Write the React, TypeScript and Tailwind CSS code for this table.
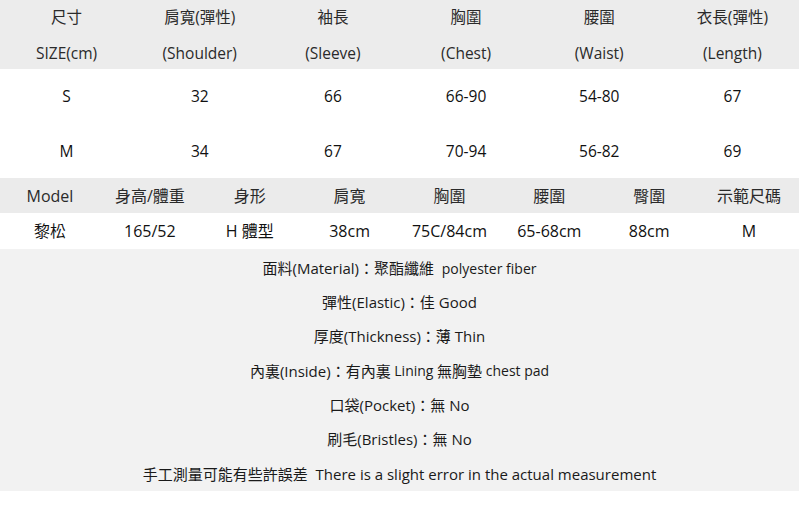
import React from "react";

const font = { fontFamily: '"Open Sans", "Noto Sans CJK TC", sans-serif' };

const head1 = ["尺寸", "肩寬(彈性)", "袖長", "胸圍", "腰圍", "衣長(彈性)"];
const head2 = ["SIZE(cm)", "(Shoulder)", "(Sleeve)", "(Chest)", "(Waist)", "(Length)"];
const rows = [
  ["S", "32", "66", "66-90", "54-80", "67"],
  ["M", "34", "67", "70-94", "56-82", "69"],
];
const modelHead = ["Model", "身高/體重", "身形", "肩寬", "胸圍", "腰圍", "臀圍", "示範尺碼"];
const modelRow = ["黎松", "165/52", "H 體型", "38cm", "75C/84cm", "65-68cm", "88cm", "M"];

export default function App() {
  return (
    <div className="w-[799px] h-[527px] bg-white text-[#222]" style={font}>
      <div className="bg-[#ececec]">
        <div className="grid grid-cols-6 h-[35px] items-center text-[15.5px] text-[#2a2a2a]">
          {head1.map((t) => (
            <div key={t} className="text-center">{t}</div>
          ))}
        </div>
        <div className="grid grid-cols-6 h-[34px] pt-[3px] items-center text-[15.5px] text-[#2a2a2a]">
          {head2.map((t) => (
            <div key={t} className="text-center">{t}</div>
          ))}
        </div>
      </div>
      {rows.map((r, i) => (
        <div key={i} className={"grid grid-cols-6 items-center text-[15.5px] text-[#111] " + (i === 0 ? "h-[56px]" : "h-[53px]")}>
          {r.map((t, j) => (
            <div key={j} className="text-center">{t}</div>
          ))}
        </div>
      ))}
      <div className="grid grid-cols-8 h-[35px] items-center bg-[#ebebeb] text-[16px] text-[#2a2a2a]">
        {modelHead.map((t) => (
          <div key={t} className="text-center">{t}</div>
        ))}
      </div>
      <div className="grid grid-cols-8 h-[36px] items-center text-[16px] text-[#111]">
        {modelRow.map((t) => (
          <div key={t} className="text-center">{t}</div>
        ))}
      </div>
      <div className="bg-[#f2f2f2] pt-[2px] h-[242px] flex flex-col items-center text-[15px] text-[#1a1a1a]">
        <div className="h-[34.3px] flex items-center">
          面料(Material)：聚酯纖維&nbsp;&nbsp;<span className="text-[14px]">polyester fiber</span>
        </div>
        <div className="h-[34.3px] flex items-center">彈性(Elastic)：佳 Good</div>
        <div className="h-[34.3px] flex items-center">厚度(Thickness)：薄 Thin</div>
        <div className="h-[34.3px] flex items-center">
          內裏(Inside)：有內裏 <span className="text-[14px]">&nbsp;Lining&nbsp;</span>無胸墊 <span className="text-[14px]">&nbsp;chest pad</span>
        </div>
        <div className="h-[34.3px] flex items-center">口袋(Pocket)：無 No</div>
        <div className="h-[34.3px] flex items-center">刷毛(Bristles)：無 No</div>
        <div className="h-[34.3px] flex items-center">
          手工測量可能有些許誤差&nbsp;&nbsp;There is a slight error in the actual measurement
        </div>
      </div>
    </div>
  );
}
